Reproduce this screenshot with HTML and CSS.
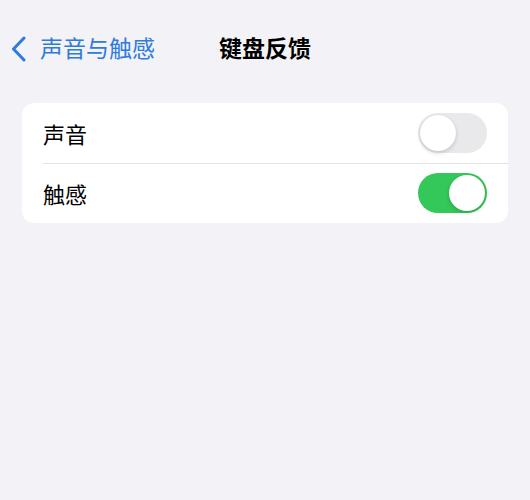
FILE: index.html
```html
<!DOCTYPE html>
<html lang="zh">
<head>
  <meta charset="UTF-8" />
  <meta name="viewport" content="width=device-width, initial-scale=1.0" />
  <title>键盘反馈</title>
  <link rel="stylesheet" href="styles.css">
</head>
<body>
  <header class="nav">
    <a class="back" href="#">
      <svg class="chevron" width="17" height="26" viewBox="0 0 17 26"><path d="M14 2 L3.5 13 L14 24" fill="none" stroke="currentColor" stroke-width="3" stroke-linecap="round" stroke-linejoin="round"/></svg>
      <span>声音与触感</span>
    </a>
    <h1 class="title">键盘反馈</h1>
  </header>

  <main>
    <ul class="group">
      <li class="row">
        <span class="label">声音</span>
        <span class="switch"><span class="knob"></span></span>
      </li>
      <li class="row">
        <span class="label">触感</span>
        <span class="switch on"><span class="knob"></span></span>
      </li>
    </ul>
  </main>
</body>
</html>
```

FILE: styles.css
```css
body { margin: 0; background: #f2f2f7; font-family: "Noto Sans CJK SC", "Noto Sans", sans-serif; color: #000; }
.nav { position: relative; height: 103px; display: flex; justify-content: center; padding-top: 33px; box-sizing: border-box; }
.back { position: absolute; left: 10px; top: 35px; display: flex; align-items: center; gap: 13px; color: #2f7bdb; text-decoration: none; font-size: 23px; line-height: 28px; }
.back span { position: relative; top: -2px; }
.chevron { display: block; }
.title { margin: 0; font-size: 23px; font-weight: 700; line-height: 28px; }
main { padding: 0 22px; }
.group { list-style: none; margin: 0; padding: 0; background: #fff; border-radius: 12px; overflow: hidden; }
.row { height: 60px; display: flex; align-items: center; justify-content: space-between; padding: 0 21px; position: relative; }
.row + .row::before { content: ""; position: absolute; left: 21px; right: 0; top: 0; border-top: 1px solid #e3e3e6; }
.label { font-size: 22px; line-height: 28px; }
.switch { width: 69px; height: 40px; border-radius: 20px; background: #e9e9eb; display: flex; align-items: center; padding: 2px; box-sizing: border-box; }
.switch.on { background: #34c759; justify-content: flex-end; }
.knob { width: 36px; height: 36px; border-radius: 50%; background: #fff; box-shadow: 0 2px 4px rgba(0,0,0,0.15), 0 0 1px rgba(0,0,0,0.1); }
```
